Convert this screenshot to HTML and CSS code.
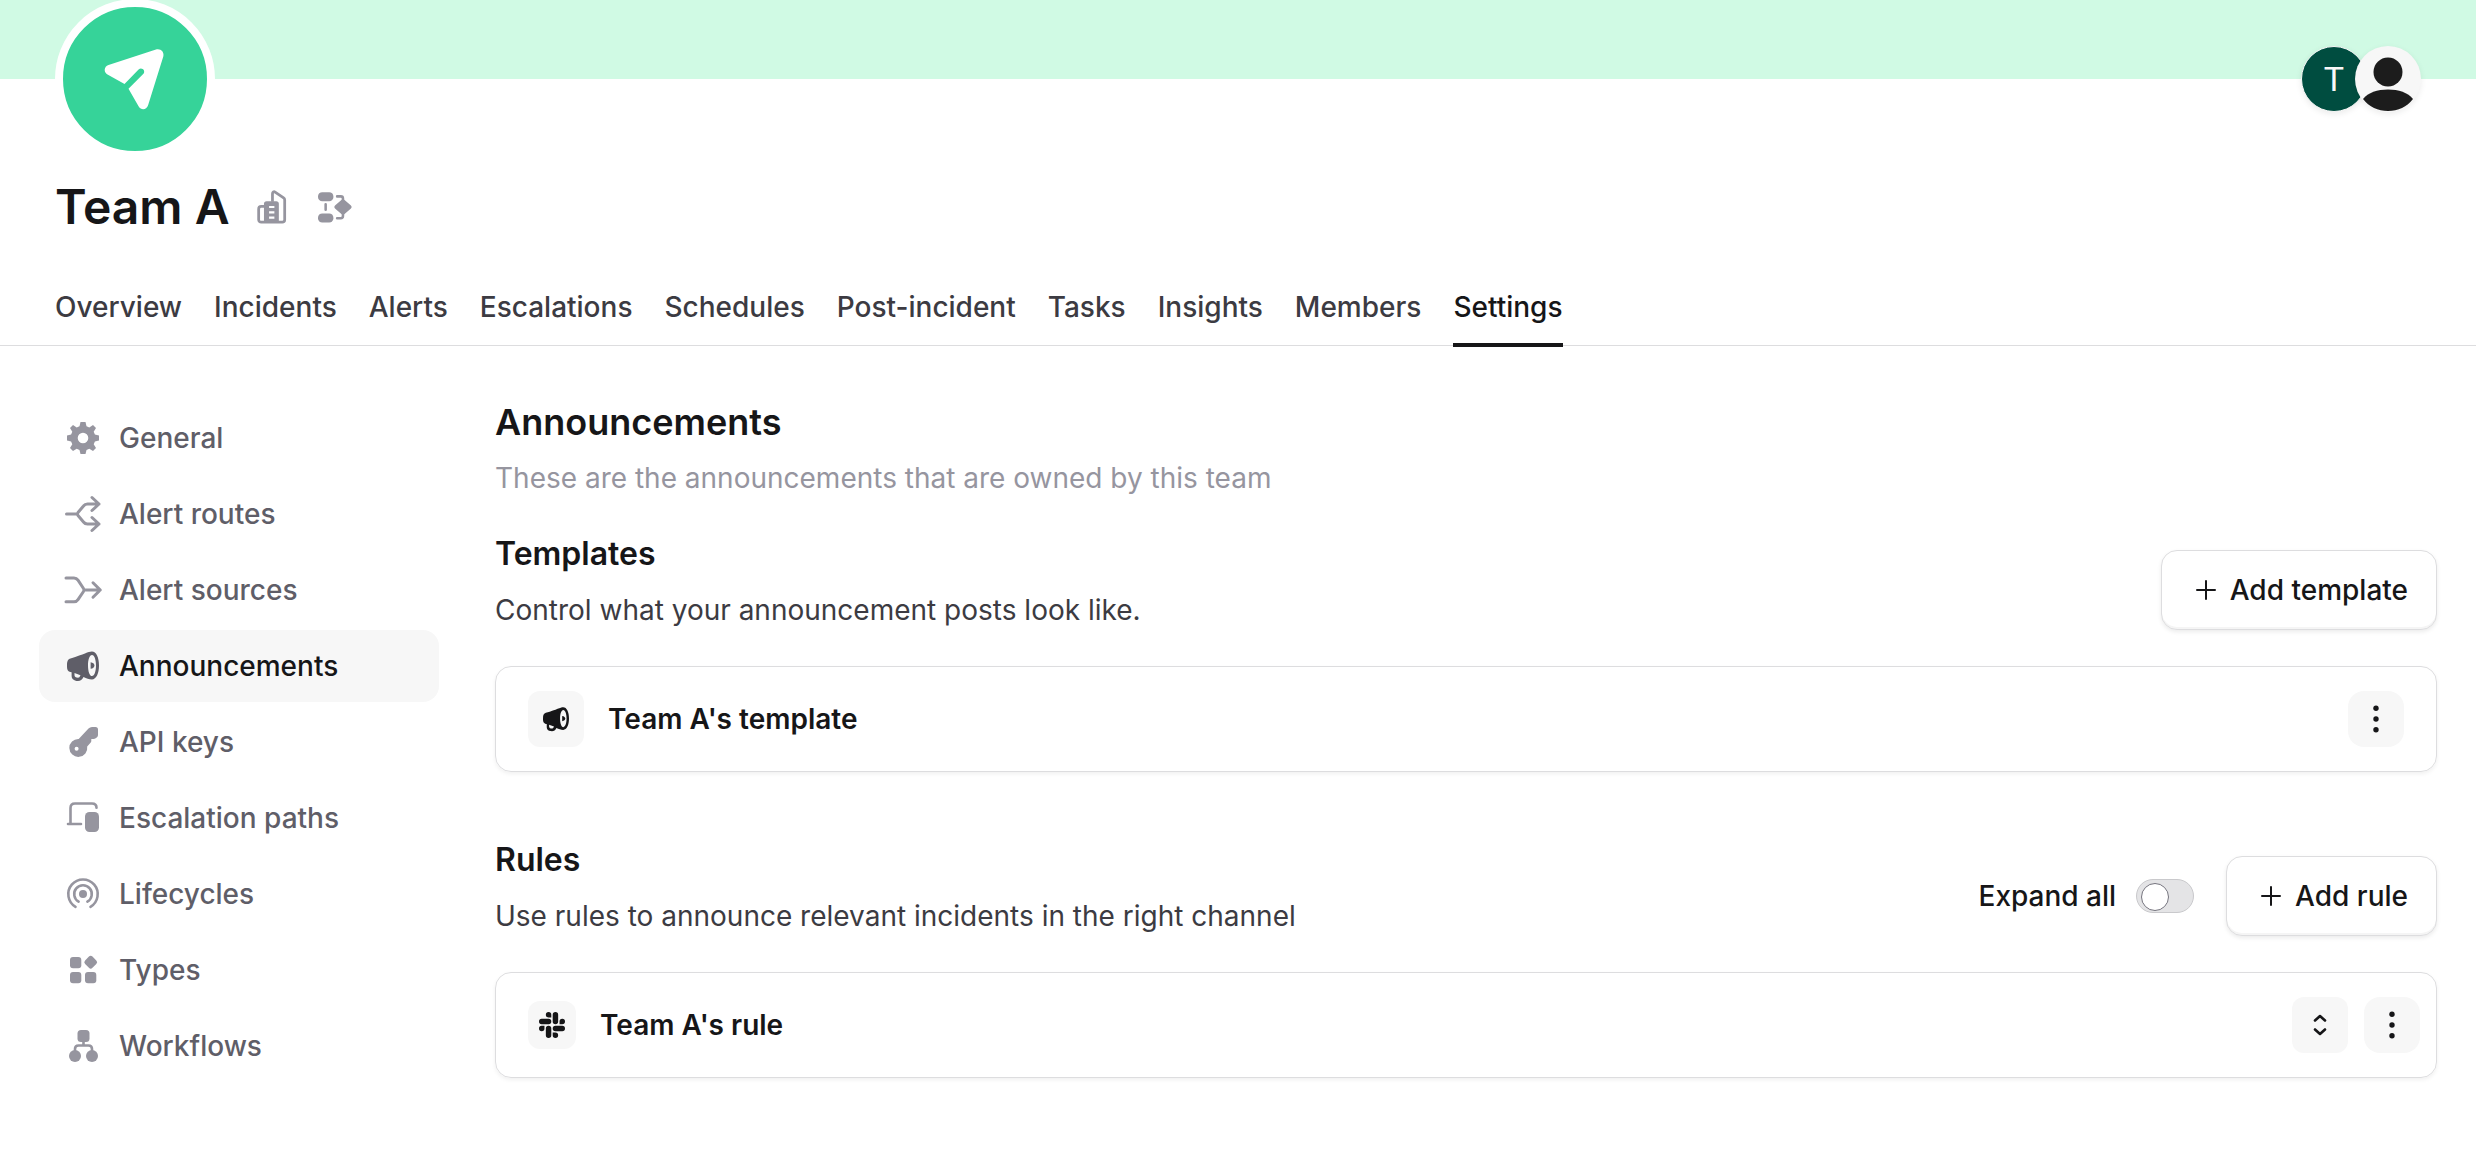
FILE: index.html
```html
<!DOCTYPE html>
<html lang="en">
<head>
    <meta charset="utf-8">
    <title>Team A - Settings</title>
    <link rel="stylesheet" href="styles.css">
</head>
<body>
    <!-- Shared icon shapes -->
    <svg class="sprite" width="0" height="0" aria-hidden="true">
        <symbol id="megaphone" viewBox="0 0 32 32">
            <path fill-rule="evenodd" d="M24.9 1.6C21 1.6 17.500 4.500 3.500 8.400 1 9.200 0 10.900 0 15v2c0 3 1.200 4.500 3.400 5l1.200.3V26c0 2.800 2 4.500 4.800 4.900l1.600.1c2.500 0 4.200-1.300 5.500-4 3 1.200 5.500 2.400 8.400 2.400 4.400 0 7.100-6 7.100-13.900S29.300 1.600 24.900 1.600zM25 5c-2.400 0-4 4.600-4 10.400S22.600 26 25 26s4-4.700 4-10.500S27.400 5 25 5zM7.500 23l6 2.300c-.7 1.700-1.400 2.500-2.500 2.500-2.300 0-3.500-1-3.500-2.500z"/>
            <path d="M23.600 12.200c2.400.3 3.800 1.500 3.800 3.300s-1.400 3-3.800 3.300z"/>
        </symbol>
        <symbol id="dots" viewBox="0 0 32 32">
            <circle cx="16" cy="5.300" r="2.700"/>
            <circle cx="16" cy="16" r="2.700"/>
            <circle cx="16" cy="26.700" r="2.700"/>
        </symbol>
        <symbol id="plus" viewBox="0 0 20 20">
            <path d="M10 1v18M1 10h18" fill="none" stroke="currentColor" stroke-width="2" stroke-linecap="round"/>
        </symbol>
    </svg>

    <header class="banner">
        <div class="team-avatar">
            <svg viewBox="0 0 144 144" aria-hidden="true">
                <path d="M93 42.500c4.500-1.300 8.500 2.300 7.300 7L85 98.500c-1.500 4.500-7 4.800-9.300 1L65.500 81.800 80.200 67.100c3-3.300-1.400-7.600-4.600-4.600L61.500 77 44.500 67.500c-4-2.300-3.700-8 1-9.600z"/>
            </svg>
        </div>
        <div class="members">
            <span class="member initial">T</span>
            <span class="member person">
                <svg viewBox="0 0 66 66" aria-hidden="true">
                    <circle cx="33" cy="26" r="14.500"/>
                    <path d="M8 53C13 46.500 22.500 43.500 33 43.500S53 46.500 58 53C52 61 43 65 33 65S14 61 8 53z"/>
                </svg>
            </span>
        </div>
    </header>

    <div class="title">
        <h1>Team A</h1>
        <svg viewBox="0 0 32 32" aria-hidden="true">
            <path d="M15.500 11V3.500c0-1.500 1.300-2.300 2.500-1.500l8 5.500c.7.500 1 1 1 1.800V28c0 1.500-.8 2.300-2.300 2.300H5c-1.500 0-2.500-.8-2.500-2.300V18c0-1.500 1-2.500 2.500-2.500h3" fill="none" stroke="currentColor" stroke-width="2.600" stroke-linejoin="round"/>
            <path fill-rule="evenodd" d="M10 10.500h9q2.500 0 2.500 2.500v18h-14V13q0-2.500 2.500-2.500zM12.300 15v2h5v-2zM12.300 20v2h5v-2zM12.300 25v2h5v-2z"/>
        </svg>
        <svg viewBox="0 0 32 32" aria-hidden="true">
            <rect x="0" y="2" width="14.500" height="8.500" rx="4"/>
            <rect x="0" y="22" width="14.500" height="8.500" rx="4"/>
            <path d="M22 9.500q1.500-1.500 3 0l6 5q1.500 1.500 0 3l-6 5q-1.500 1.500-3 0l-6-5q-1.500-1.500 0-3z"/>
            <path d="M7.200 13.500v5M18 6h3.500q2 0 2 2v4M18 26.500h3.500q2 0 2-2v-4" fill="none" stroke="currentColor" stroke-width="2.400" stroke-linecap="round"/>
        </svg>
    </div>

    <nav class="tabs">
        <a href="#">Overview</a>
        <a href="#">Incidents</a>
        <a href="#">Alerts</a>
        <a href="#">Escalations</a>
        <a href="#">Schedules</a>
        <a href="#">Post-incident</a>
        <a href="#">Tasks</a>
        <a href="#">Insights</a>
        <a href="#">Members</a>
        <a href="#" class="active">Settings</a>
    </nav>

    <div class="layout">
        <nav class="sidebar">
            <a href="#">
                <svg viewBox="0 0 40 40" aria-hidden="true">
                    <path fill-rule="evenodd" d="M17.500 4h5l1 4.200 2.800 1.200L30 7l3 3-2.300 3.700 1.200 2.800 4.100 1v5l-4.100 1-1.200 2.800L33 30l-3 3-3.700-2.300-2.800 1.200-1 4.100h-5l-1-4.100-2.800-1.200L10 33l-3-3 2.300-3.700-1.200-2.800-4.100-1v-5l4.100-1 1.200-2.800L7 10l3-3 3.700 2.400 2.800-1.200zM20 14.700a5.300 5.300 0 1 0 0 10.600 5.300 5.300 0 0 0 0-10.600z"/>
                </svg>
                General
            </a>
            <a href="#">
                <svg viewBox="0 0 40 40" class="stroke" aria-hidden="true">
                    <path d="M3.500 20H14M36 10H24.500q-2.500 0-4 2L15 18.500q-1 1.500 0 3L20.500 28q1.500 2 4 2H36M29 3.500l7 6.500-7 6.500M29 23.500l7 6.500-7 6.500"/>
                </svg>
                Alert routes
            </a>
            <a href="#">
                <svg viewBox="0 0 40 40" class="stroke" aria-hidden="true">
                    <path d="M3 8h8q2.500 0 4 2.200l5.500 8.300q1 1.500 0 3L15 29.600q-1.500 2.200-4 2.200H3M21 20h16M30 12.800l7.300 7.200-7.300 7.200"/>
                </svg>
                Alert sources
            </a>
            <a href="#" class="active">
                <svg viewBox="-4 -4 40 40" aria-hidden="true"><use href="#megaphone" width="32" height="32"/></svg>
                Announcements
            </a>
            <a href="#">
                <svg viewBox="0 0 40 40" aria-hidden="true">
                    <path fill-rule="evenodd" d="M25.500 6.500q1.500-1.500 3.500-1.500h3.500q2.500 0 2.500 2.500V13q0 1.500-1 2.300l-1.300 1q-1 .8-2.200.8h-2.200v2q0 1-.8 1.700l-3.300 3.700a9 9 0 1 1-8.500-7.600zM13.600 24.700a2 2 0 1 0 0 4 2 2 0 0 0 0-4z"/>
                </svg>
                API keys
            </a>
            <a href="#">
                <svg viewBox="0 0 40 40" aria-hidden="true">
                    <path d="M7.500 25V10q0-4.500 4.500-4.500h17q4.500 0 4.500 4.200M5 26h13" fill="none" stroke="currentColor" stroke-width="2.600" stroke-linecap="round"/>
                    <rect x="22" y="14" width="14" height="20" rx="4.500"/>
                </svg>
                Escalation paths
            </a>
            <a href="#">
                <svg viewBox="0 0 40 40" class="stroke thin" aria-hidden="true">
                    <path d="M12.500 32.800a14.700 14.700 0 1 1 15 0M15.600 27.700a8.800 8.800 0 1 1 8.800 0"/>
                    <circle cx="20" cy="20" r="4" fill="currentColor" stroke="none"/>
                </svg>
                Lifecycles
            </a>
            <a href="#">
                <svg viewBox="0 0 40 40" aria-hidden="true">
                    <rect x="7" y="7" width="11.300" height="11.300" rx="3"/>
                    <rect x="22" y="22" width="11.300" height="11.300" rx="3"/>
                    <rect x="7" y="22" width="11.300" height="11.300" rx="3"/>
                    <rect x="22.500" y="7" width="10.400" height="10.400" rx="2.500" transform="rotate(45 27.700 12.200)"/>
                </svg>
                Types
            </a>
            <a href="#">
                <svg viewBox="0 0 40 40" aria-hidden="true">
                    <rect x="14.500" y="4" width="12" height="12" rx="3.500"/>
                    <circle cx="12" cy="30" r="6"/>
                    <circle cx="29" cy="30" r="6"/>
                    <path d="M20.500 15v4.500M12 26v-3q0-3.500 3.500-3.500h10q3.500 0 3.500 3.500v3" fill="none" stroke="currentColor" stroke-width="2.600"/>
                </svg>
                Workflows
            </a>
        </nav>

        <main>
            <div class="page-header">
                <h2>Announcements</h2>
                <p>These are the announcements that are owned by this team</p>
            </div>

            <section>
                <div class="section-header">
                    <div>
                        <h3>Templates</h3>
                        <p>Control what your announcement posts look like.</p>
                    </div>
                    <div class="actions">
                        <button class="add"><svg aria-hidden="true"><use href="#plus"/></svg>Add template</button>
                    </div>
                </div>
                <div class="card">
                    <span class="badge"><svg aria-hidden="true"><use href="#megaphone"/></svg></span>
                    <h4>Team A's template</h4>
                    <button class="icon-button" aria-label="Template options"><svg aria-hidden="true"><use href="#dots"/></svg></button>
                </div>
            </section>

            <section>
                <div class="section-header">
                    <div>
                        <h3>Rules</h3>
                        <p>Use rules to announce relevant incidents in the right channel</p>
                    </div>
                    <div class="actions">
                        <label for="expandAll">Expand all</label>
                        <input type="checkbox" class="toggle" id="expandAll">
                        <button class="add"><svg aria-hidden="true"><use href="#plus"/></svg>Add rule</button>
                    </div>
                </div>
                <div class="card rule">
                    <span class="badge small">
                        <svg viewBox="0 0 24 24" aria-hidden="true">
                            <path d="M5.042 15.165a2.528 2.528 0 0 1-2.520 2.523A2.528 2.528 0 0 1 0 15.165a2.527 2.527 0 0 1 2.522-2.520h2.520v2.520zM6.313 15.165a2.527 2.527 0 0 1 2.521-2.520 2.527 2.527 0 0 1 2.521 2.520v6.313A2.528 2.528 0 0 1 8.834 24a2.528 2.528 0 0 1-2.521-2.522v-6.313zM8.834 5.042a2.528 2.528 0 0 1-2.521-2.520A2.528 2.528 0 0 1 8.834 0a2.528 2.528 0 0 1 2.521 2.522v2.520H8.834zM8.834 6.313a2.528 2.528 0 0 1 2.521 2.521 2.528 2.528 0 0 1-2.521 2.521H2.522A2.528 2.528 0 0 1 0 8.834a2.528 2.528 0 0 1 2.522-2.521h6.312zM18.956 8.834a2.528 2.528 0 0 1 2.522-2.521A2.528 2.528 0 0 1 24 8.834a2.528 2.528 0 0 1-2.522 2.521h-2.522V8.834zM17.688 8.834a2.528 2.528 0 0 1-2.523 2.521 2.527 2.527 0 0 1-2.520-2.521V2.522A2.527 2.527 0 0 1 15.165 0a2.528 2.528 0 0 1 2.523 2.522v6.312zM15.165 18.956a2.528 2.528 0 0 1 2.523 2.522A2.528 2.528 0 0 1 15.165 24a2.527 2.527 0 0 1-2.520-2.522v-2.522h2.520zM15.165 17.688a2.527 2.527 0 0 1-2.520-2.523 2.526 2.526 0 0 1 2.520-2.520h6.313A2.527 2.527 0 0 1 24 15.165a2.528 2.528 0 0 1-2.522 2.523h-6.313z"/>
                        </svg>
                    </span>
                    <h4>Team A's rule</h4>
                    <button class="icon-button expand" aria-label="Expand rule">
                        <svg viewBox="0 0 32 32" class="stroke thin" aria-hidden="true"><path d="M11 11.500L16 7l5 4.500M11 20.500l5 4.500 5-4.500"/></svg>
                    </button>
                    <button class="icon-button" aria-label="Rule options"><svg aria-hidden="true"><use href="#dots"/></svg></button>
                </div>
            </section>
        </main>
    </div>
</body>
</html>
```

FILE: styles.css
```css
* {
    box-sizing: border-box;
}
body {
    font-family: Inter, sans-serif;
    font-size: 28px;
    line-height: 40px;
    margin: 0;
    background: #fff;
    color: #161618;
}
h1, h2, h3, h4, p {
    margin: 0;
    font-weight: 600;
}
a {
    text-decoration: none;
    font-weight: 500;
}
svg {
    display: block;
    flex: none;
    fill: currentColor;
}
.sprite {
    position: absolute;
}
.stroke {
    fill: none;
    stroke: currentColor;
    stroke-width: 3;
    stroke-linecap: round;
    stroke-linejoin: round;
}
.thin {
    stroke-width: 2.6;
}

.banner {
    display: flex;
    justify-content: space-between;
    align-items: center;
    height: 158px;
    padding: 0 55px;
    background: linear-gradient(#d0fae4 50%, #fff 50%);
}
.team-avatar {
    width: 160px;
    height: 160px;
    border: 8px solid #fff;
    border-radius: 50%;
    background: #36d399;
    color: #fff;
}
.members {
    display: flex;
}
.member {
    width: 66px;
    height: 66px;
    border-radius: 50%;
    box-shadow: 0 2px 6px rgba(0, 0, 0, 0.08);
}
.initial {
    display: flex;
    align-items: center;
    justify-content: center;
    margin-right: -12px;
    border: 1px solid #f8f8f8;
    background: #004d40;
    color: #f8f8f8;
    font-family: Roboto, sans-serif;
    font-size: 34px;
}
.person {
    background: #f7f7f7;
    color: #1c1c1c;
}

.title {
    display: flex;
    align-items: center;
    gap: 24px;
    padding: 21px 55px 0;
    color: #96959f;
}
.title h1 {
    font-size: 48px;
    line-height: 56px;
    color: #161618;
}
.title svg {
    width: 38px;
    height: 34px;
}

.tabs {
    display: flex;
    gap: 32px;
    padding: 52px 55px 0;
    border-bottom: 1px solid #dddddf;
}
.tabs a {
    padding-bottom: 16px;
    margin-bottom: -2px;
    border-bottom: 4px solid transparent;
    color: #3c3b42;
}
.tabs a.active {
    border-color: #161618;
    color: #161618;
}

.layout {
    display: flex;
    gap: 56px;
    padding: 56px 39px 0;
}
.sidebar {
    display: flex;
    flex-direction: column;
    flex: none;
    gap: 4px;
    width: 400px;
}
.sidebar a {
    display: flex;
    align-items: center;
    gap: 16px;
    padding: 16px 24px;
    border-radius: 16px;
    color: #5f5e68;
}
.sidebar svg {
    width: 40px;
    height: 40px;
    color: #96959f;
}
.sidebar a.active {
    background: #f7f7f7;
    color: #161618;
}
.sidebar a.active svg {
    color: #5f5e68;
}

main {
    flex: 1;
}
.page-header {
    margin-bottom: 36px;
}
h2 {
    margin-bottom: 16px;
    font-size: 36px;
}
h3 {
    margin-bottom: 16px;
    font-size: 32px;
}
h4 {
    flex: 1;
    font-size: 28px;
}
p {
    font-weight: 400;
    color: #3c3b42;
}
.page-header p {
    color: #96959f;
}
section {
    margin-bottom: 68px;
}
.section-header {
    display: flex;
    justify-content: space-between;
    align-items: flex-end;
    margin-bottom: 36px;
}
.actions {
    display: flex;
    align-items: center;
}

button {
    display: flex;
    align-items: center;
    justify-content: center;
    border: none;
    font: inherit;
    color: #161618;
    cursor: pointer;
}
.add {
    gap: 14px;
    height: 80px;
    padding: 0 28px 0 34px;
    border: 1px solid #dddddf;
    border-radius: 16px;
    background: #fff;
    font-weight: 500;
    box-shadow: inset 0 -2px 0 #f5f5f5, 0 2px 4px rgba(0, 0, 0, 0.08);
}
.add svg {
    width: 20px;
    height: 20px;
}
.actions label {
    font-weight: 500;
}
.toggle {
    appearance: none;
    width: 58px;
    height: 34px;
    margin: 0 32px 0 20px;
    padding: 3px 4px;
    border: 1px solid #c9c9cc;
    border-radius: 17px;
    background: #e4e4e6;
    cursor: pointer;
}
.toggle::before {
    content: "";
    display: block;
    width: 26px;
    height: 26px;
    border: 1px solid #75747e;
    border-radius: 50%;
    background: #fff;
}
.toggle:checked::before {
    margin-left: auto;
}

.card {
    display: flex;
    align-items: center;
    gap: 16px;
    padding: 24px 32px;
    border: 1px solid #dddddf;
    border-radius: 16px;
    box-shadow: 0 2px 4px rgba(0, 0, 0, 0.06);
}
.rule {
    padding-right: 16px;
}
.badge, .icon-button {
    display: flex;
    align-items: center;
    justify-content: center;
    flex: none;
    width: 56px;
    height: 56px;
    padding: 0;
    border-radius: 16px;
    background: #f7f7f7;
}
.badge {
    margin-right: 8px;
    border-radius: 12px;
}
.small {
    width: 48px;
    height: 48px;
}
.expand {
    border-radius: 12px;
}
.icon-button svg {
    width: 32px;
    height: 32px;
}
.badge svg {
    width: 26px;
    height: 26px;
}
```
